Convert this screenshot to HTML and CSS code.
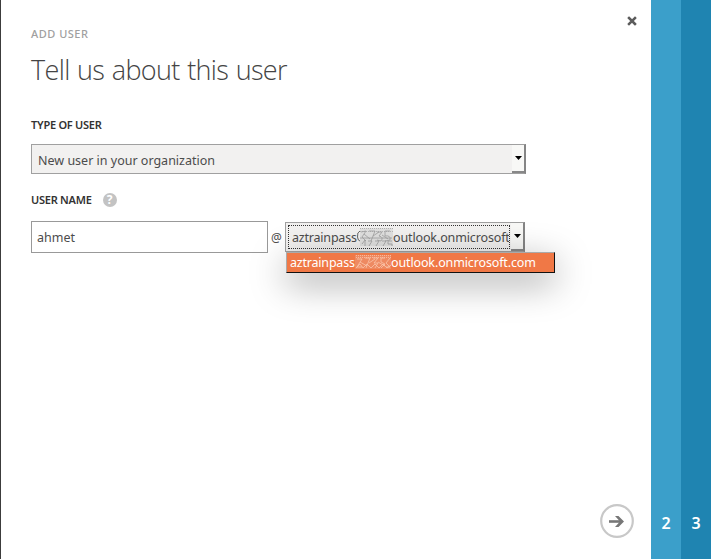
FILE: index.html
```html
<!DOCTYPE html>
<html lang="en">
<head>
<meta charset="utf-8">
<title>Add user</title>
<link rel="stylesheet" href="styles.css">
</head>
<body>
<div class="wizard">
  <main class="panel">
    <button class="close" aria-label="Close"><svg width="10" height="10" viewBox="0 0 10 10"><path d="M2 2L8 8M8 2L2 8" stroke="#5c5c5c" stroke-width="2.5" stroke-linecap="square"/></svg></button>
    <div class="eyebrow"><span>ADD USER</span></div>
    <h1><span>Tell us about this user</span></h1>
    <div class="label label-type"><span>TYPE OF USER</span></div>
    <div class="select select-type"><div class="value"><span>New user in your organization</span></div><div class="arrow"><svg width="7" height="4" viewBox="0 0 7 4"><path d="M0 0H7L3.5 4Z"/></svg></div></div>
    <div class="label label-name"><span>USER NAME</span><i class="help">?</i></div>
    <div class="row">
      <div class="input"><span>ahmet</span></div>
      <div class="at">@</div>
      <div class="select select-domain">
        <div class="value focus"><span class="prefix">aztrainpass</span><b class="scribble"><svg width="36" height="20" viewBox="0 0 36 20"><path class="wash" d="M3 1H36V19H3Z"/><path class="edge" d="M3 1.5H36M3 4.5H36"/><path class="digit" d="M3 4Q0 5 0.5 10Q1 14 3 14"/><path d="M4 5L9 4L5 10L9 14M12 4H18L14 14M20 5H25L22 9Q27 10 24 14L20 13M33 4H28V9Q34 8 33 13L28 14M7 7L13 12M16 9L22 5M25 8L31 12M5 17L8 13V19M11 14H15L12 19M18 14H22L19 19M25 14H29L26 19M35 14H31V17H35V19M3 11H35"/></svg></b><span class="suffix">outlook.onmicrosoft</span></div>
        <div class="arrow"><svg width="7" height="4" viewBox="0 0 7 4"><path d="M0 0H7L3.5 4Z"/></svg></div>
        <div class="popup"><span class="prefix">aztrainpass</span><b class="scribble"><svg width="37" height="18" viewBox="0 0 37 18"><path class="wash" d="M0 1H37V15H0Z"/><path class="edge" d="M1 1.5H37M1 3.5H37"/><path d="M2 5H7L2 13H7M10 4H15L11 14M18 4H23L19 9H23L20 14M30 4H26V8L30 10L26 14M35 4L31 9L35 13H31M5 8L12 12M14 9L20 5M23 8L30 12M1 14L5 10L8 14L12 10L16 14L20 10L24 14L28 10L32 14L36 11"/></svg></b><span class="suffix">outlook.onmicrosoft.com</span></div>
      </div>
    </div>
    <button class="next" aria-label="Next"><svg width="34" height="34" viewBox="0 0 34 34"><circle cx="17" cy="17" r="15.8" fill="#fff" stroke="#c8c8c8" stroke-width="2.2"/><path d="M9 17.5H22" stroke="#777" stroke-width="2.6"/><path d="M15 12H18.5L24 17.5L18.5 23H15L20 17.5Z" fill="#777"/></svg></button>
  </main>
  <div class="step step-two">2</div>
  <div class="step step-three">3</div>
</div>
</body>
</html>
```
FILE: styles.css
```css
* { box-sizing: border-box; }
body { margin: 0; font-family: "Noto Sans", "Open Sans", sans-serif; font-size: 12.5px; color: #4c4c4c; overflow: hidden; }
button { border: 0; padding: 0; background: none; display: block; }
svg { display: block; }
span { white-space: nowrap; }
.wizard { display: flex; height: 559px; background: #fff; }
.panel { position: relative; width: 651px; padding: 24px 0 0 30px; border-left: 1px solid #3c3c3c; }
.close { position: absolute; left: 626px; top: 16px; }
.next { position: absolute; left: 599px; top: 504px; }
.eyebrow { height: 20px; line-height: 20px; font-size: 11px; font-weight: 500; color: #a0a0a0; letter-spacing: 0.5px; }
h1 { margin: 3px 0 0; height: 46px; line-height: 46px; font-family: "Open Sans", sans-serif; font-size: 27px; font-weight: 300; color: #444; letter-spacing: -0.65px; word-spacing: 1.1px; }
.label { height: 20px; line-height: 20px; font-size: 11px; font-weight: 600; color: #333; display: flex; align-items: center; letter-spacing: -0.25px; }
.label-type { margin-top: 22px; }
.label-name { margin-top: 16px; }
.help { width: 14px; height: 14px; margin-left: 11px; border-radius: 50%; background: #c3c3c3; color: #fff; font: 700 12px/14px "Noto Sans", sans-serif; text-align: center; letter-spacing: 0; }
.select { position: relative; display: flex; border: 1px solid #a0a0a0; border-right: 2px solid #858585; background: #f2f1f0; }
.select-type { width: 495px; height: 30px; margin-top: 9px; }
.value { flex: 1; min-width: 0; line-height: 31px; padding-left: 6px; overflow: hidden; white-space: nowrap; }
.arrow { width: 12px; background: #f8f8f6; display: flex; align-items: center; justify-content: center; border-bottom: 2px solid #888; }
.row { display: flex; height: 32px; margin-top: 11px; }
.input { width: 237px; height: 32px; border: 1px solid #999; padding-left: 5px; line-height: 31px; }
.at { width: 17px; text-align: center; line-height: 33px; font-size: 12px; }
.select-domain { width: 240px; height: 30px; margin-top: 1px; }
.focus { margin: 2px 1px 2px 2px; border: 1px dotted #333; padding-left: 3px; line-height: 23px; display: flex; align-items: center; }
.prefix { flex: none; width: 65px; letter-spacing: -0.2px; }
.suffix { letter-spacing: -0.13px; }
.scribble { flex: none; width: 36px; overflow: hidden; }
.scribble path { fill: none; stroke: #a0a0a0; stroke-width: .8; }
.scribble .wash { fill: #e0e0df; stroke: none; }
.scribble .edge { stroke: #aaa; stroke-dasharray: 1 1; }
.scribble .digit { stroke: #666; stroke-width: 1; }
.popup { position: absolute; left: 0; top: 29px; width: 269px; height: 21px; display: flex; align-items: center; padding-left: 3px; border: 1px solid #111; border-top-color: #aaa; border-left: 1px solid #aaa; background: #f07846; color: #fff; line-height: 20px; box-shadow: 0 10px 36px rgba(0,0,0,.38); }
.popup span { padding-top: 1px; }
.popup .scribble path { stroke: #fac4aa; }
.popup .scribble .wash { fill: #ee8a62; stroke: none; }
.step { width: 30px; padding-top: 512px; line-height: 22px; text-align: center; color: #fff; font-size: 16px; font-weight: 600; }
.step-two { background: #3b9fca; }
.step-three { background: #1f84b1; }
```
